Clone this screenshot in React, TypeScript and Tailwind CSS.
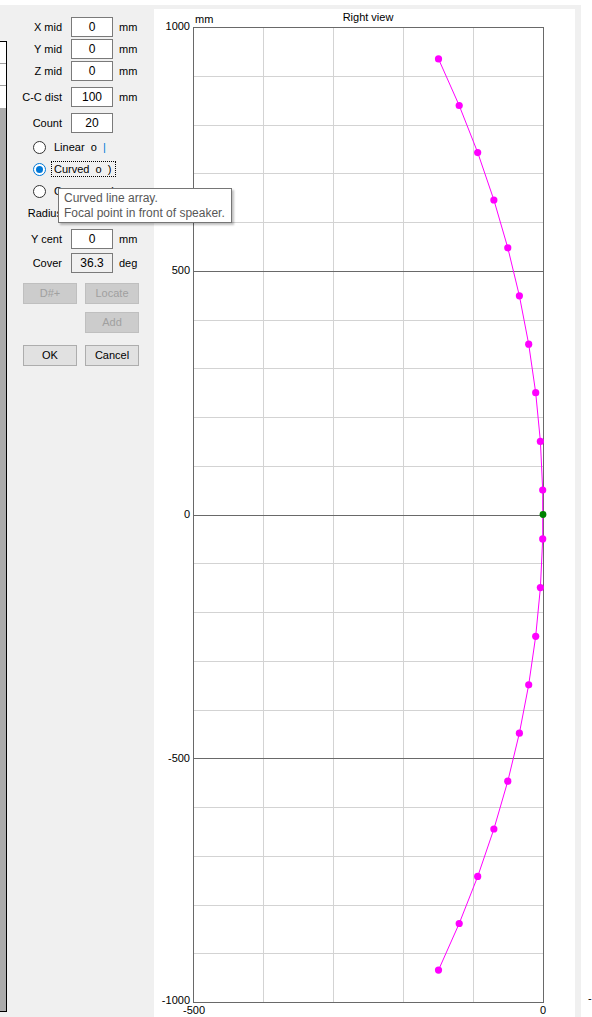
import React from 'react';

// plot geometry (svg coords inside chart panel)
const PL = 39;
const PR = 389;
const PT = 18;
const PB = 993;

const px = (x: number) => PL + ((x + 500) / 500) * (PR - PL);
const py = (y: number) => PT + ((1000 - y) / 2000) * (PB - PT);
const crisp = (v: number) => Math.round(v) + 0.5;

// curved line array: 20 boxes, 100 mm c-c, 36.3 deg cover
const N = 20;
const COVER = 36.3;
const RADIUS = 3000;
const speakers = Array.from({ length: N }, (_, i) => {
  const th = (((i - (N - 1) / 2) * COVER) / (N - 1)) * (Math.PI / 180);
  return { x: -RADIUS * (1 - Math.cos(th)), y: RADIUS * Math.sin(th) };
});

const Chart = () => {
  const minorY = [900, 800, 700, 600, 400, 300, 200, 100, -100, -200, -300, -400, -600, -700, -800, -900];
  const majorY = [500, 0, -500];
  const gridX = [-400, -300, -200, -100];
  const path = speakers.map((p, i) => `${i ? 'L' : 'M'}${px(p.x).toFixed(1)} ${py(p.y).toFixed(1)}`).join(' ');

  return (
    <svg width={421} height={1008} className="block">
      <g shapeRendering="crispEdges">
        {minorY.map((v) => (
          <line key={v} x1={PL} x2={PR} y1={crisp(py(v))} y2={crisp(py(v))} stroke="#d3d3d3" />
        ))}
        {gridX.map((v) => (
          <line key={v} x1={crisp(px(v))} x2={crisp(px(v))} y1={PT} y2={PB} stroke="#d3d3d3" />
        ))}
        {majorY.map((v) => (
          <line key={v} x1={PL} x2={PR} y1={crisp(py(v))} y2={crisp(py(v))} stroke="#696969" />
        ))}
        <rect x={PL + 0.5} y={PT + 0.5} width={PR - PL} height={PB - PT} fill="none" stroke="#696969" />
      </g>

      <path d={path} fill="none" stroke="#ff00ff" strokeWidth={1} />
      {speakers.map((p, i) => (
        <circle key={i} cx={px(p.x)} cy={py(p.y)} r={3.6} fill="#ff00ff" />
      ))}
      <circle cx={px(0)} cy={py(0)} r={3.4} fill="#008000" />

      <g fontSize={11} fill="#000">
        <text x={214} y={12} textAnchor="middle">Right view</text>
        <text x={41} y={14}>mm</text>
        <text x={36} y={21} textAnchor="end">1000</text>
        <text x={36} y={265} textAnchor="end">500</text>
        <text x={36} y={509} textAnchor="end">0</text>
        <text x={36} y={753} textAnchor="end">-500</text>
        <text x={36} y={995} textAnchor="end">-1000</text>
        <text x={40} y={1005} textAnchor="middle">-500</text>
        <text x={389} y={1005} textAnchor="middle">0</text>
      </g>
    </svg>
  );
};

type FieldProps = {
  label: string;
  value?: string;
  unit?: string;
  readOnly?: boolean;
  className?: string;
};

const Field = ({ label, value, unit, readOnly, className = '' }: FieldProps) => (
  <div className={`flex items-center h-[20px] ${className}`}>
    <span className="w-[55px] text-right whitespace-nowrap">{label}</span>
    <div
      className={`ml-[9px] w-[42px] h-[20px] border border-[#7a7a7a] flex items-center justify-center text-[12px] ${
        readOnly ? 'bg-[#f0f0f0]' : 'bg-white'
      }`}
    >
      {value}
    </div>
    {unit && <span className="ml-[6px]">{unit}</span>}
  </div>
);

const Radio = ({ checked, children }: { checked?: boolean; children: React.ReactNode }) => (
  <div className="flex items-center h-[22px] pl-[26px]">
    <span
      className={`w-[13px] h-[13px] rounded-full border bg-white flex items-center justify-center ${
        checked ? 'border-[#0078d7]' : 'border-[#333333]'
      }`}
    >
      {checked && <span className="w-[7px] h-[7px] rounded-full bg-[#0078d7]" />}
    </span>
    <span
      className={`ml-[5px] h-[16px] flex items-center pl-[2px] pr-[4px] whitespace-pre ${
        checked ? 'border border-dotted border-black' : 'border border-transparent'
      }`}
    >
      {children}
    </span>
  </div>
);

const Btn = ({ label, disabled }: { label: string; disabled?: boolean }) => (
  <div
    className={`w-[54px] h-[21px] border flex items-center justify-center ${
      disabled ? 'bg-[#cccccc] border-[#bfbfbf] text-[#a0a0a0]' : 'bg-[#e1e1e1] border-[#adadad] text-black'
    }`}
  >
    {label}
  </div>
);

export default function App() {
  return (
    <div className="w-[592px] h-[1017px] overflow-hidden bg-[#f0f0f0] flex flex-col font-['Liberation_Sans',Arial,sans-serif] text-[11px] text-black">
      <div className="h-[5px] bg-white shrink-0" />
      <div className="flex flex-1 min-h-0">
        {/* list strip on the far left */}
        <div className="w-[7px] shrink-0 mt-[36px] mb-[5px] flex flex-col border-t border-b border-r border-black">
          <div className="h-[22px] bg-white border-b border-[#a0a0a0]" />
          <div className="h-[22px] bg-white border-b border-[#a0a0a0]" />
          <div className="h-[22px] bg-white" />
          <div className="flex-1 bg-[#ababab]" />
        </div>

        {/* settings panel */}
        <div className="relative w-[147px] shrink-0 pt-[12px] flex flex-col">
          <Field label="X mid" value="0" unit="mm" />
          <Field label="Y mid" value="0" unit="mm" className="mt-[2px]" />
          <Field label="Z mid" value="0" unit="mm" className="mt-[2px]" />
          <Field label="C-C dist" value="100" unit="mm" className="mt-[6px]" />
          <Field label="Count" value="20" className="mt-[6px]" />
          <div className="mt-[3px]">
            <Radio>
              Linear  o  <span className="text-[#0078d7]">|</span>
            </Radio>
            <Radio checked>Curved  o  )</Radio>
            <Radio>Convex  o  (</Radio>
          </div>
          <Field label="Radius" value="" unit="mm" className="mt-[1px]" />
          <Field label="Y cent" value="0" unit="mm" className="mt-[6px]" />
          <Field label="Cover" value="36.3" unit="deg" readOnly className="mt-[4px]" />
          <div className="flex gap-[8px] pl-[16px] mt-[10px]">
            <Btn label="D#+" disabled />
            <Btn label="Locate" disabled />
          </div>
          <div className="flex pl-[78px] mt-[8px]">
            <Btn label="Add" disabled />
          </div>
          <div className="flex gap-[8px] pl-[16px] mt-[12px]">
            <Btn label="OK" />
            <Btn label="Cancel" />
          </div>

          {/* tooltip */}
          <div className="absolute left-[51px] top-[183px] w-[174px] h-[35px] bg-white border border-[#767676] shadow-[2px_2px_2px_rgba(0,0,0,0.25)] px-[5px] pt-[2px] text-[12px] leading-[15px] text-[#575757] whitespace-nowrap">
            <div>Curved line array.</div>
            <div>Focal point in front of speaker.</div>
          </div>
        </div>

        {/* chart panel */}
        <div className="w-[421px] shrink-0 mt-[4px] bg-white">
          <Chart />
        </div>

        {/* neighbouring panel */}
        <div className="ml-[6px] flex-1 bg-white flex flex-col justify-end pb-[11px] pl-[7px] text-[11px]">
          -
        </div>
      </div>
    </div>
  );
}
